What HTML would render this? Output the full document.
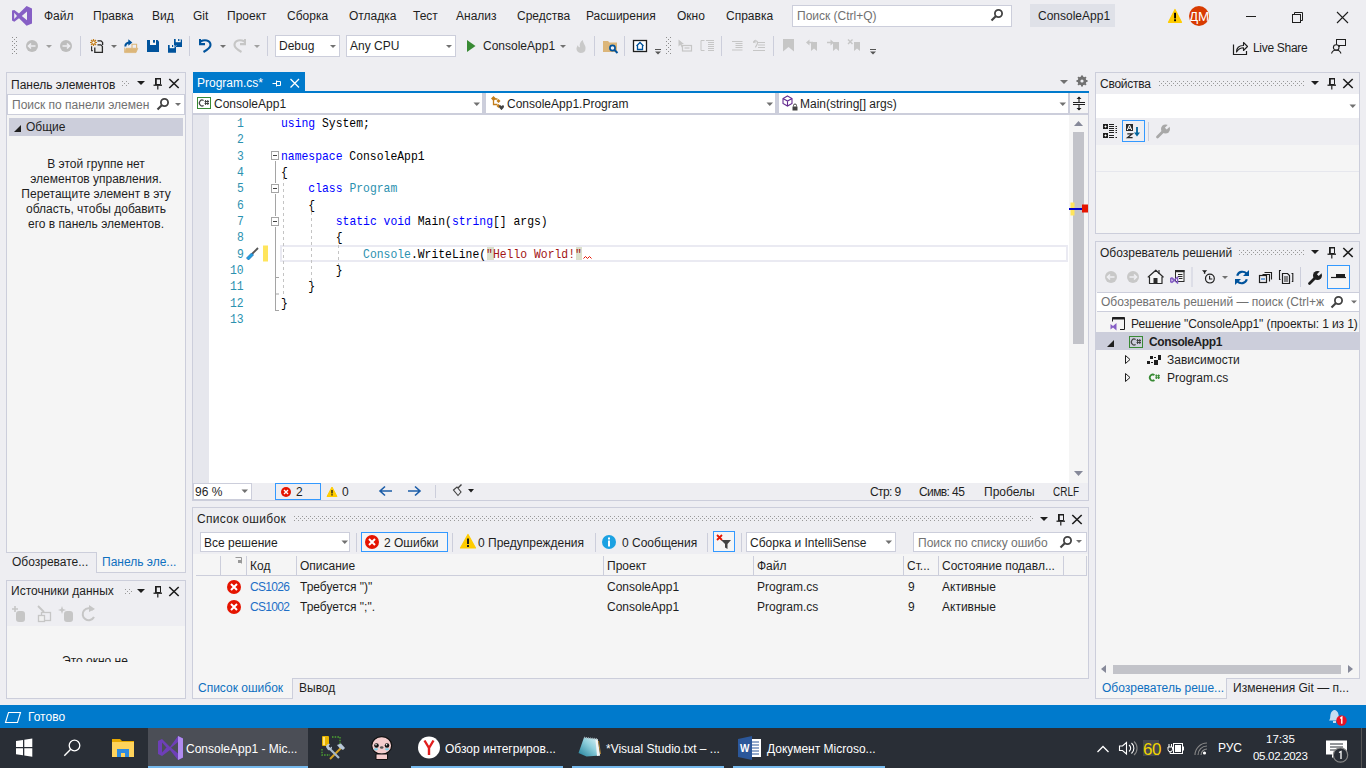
<!DOCTYPE html>
<html><head><meta charset="utf-8">
<style>
*{margin:0;padding:0;box-sizing:border-box}
html,body{width:1366px;height:768px;overflow:hidden;background:#EEEEF2;font-family:"Liberation Sans",sans-serif;font-size:12px;color:#1E1E1E}
.a{position:absolute}
.t{position:absolute;white-space:nowrap;line-height:1}
.mono{font-family:"Liberation Mono",monospace}
</style></head><body>
<!-- MENU BAR -->
<div id="menubar" class="a" style="left:0;top:0;width:1366px;height:31px;background:#EEEEF2">
<svg class="a" style="left:0;top:0" width="40" height="31"><path fill="#865FC5" fill-rule="evenodd" d="M12 10.6 L14.3 9.9 L19 13.6 L26.6 6 L32 8.4 L32 23.4 L26.6 25.8 L19 18.2 L14.3 21.8 L12 20.6 Z M14.2 12.8 L14.2 19 L17 15.9 Z M27 11.6 L27 20.2 L21.8 15.9 Z"/></svg>
<div class="t" style="left:44px;top:10px">Файл</div>
<div class="t" style="left:93px;top:10px">Правка</div>
<div class="t" style="left:152px;top:10px">Вид</div>
<div class="t" style="left:193px;top:10px">Git</div>
<div class="t" style="left:227px;top:10px">Проект</div>
<div class="t" style="left:287px;top:10px">Сборка</div>
<div class="t" style="left:349px;top:10px">Отладка</div>
<div class="t" style="left:413px;top:10px">Тест</div>
<div class="t" style="left:456px;top:10px">Анализ</div>
<div class="t" style="left:517px;top:10px">Средства</div>
<div class="t" style="left:586px;top:10px">Расширения</div>
<div class="t" style="left:677px;top:10px">Окно</div>
<div class="t" style="left:726px;top:10px">Справка</div>
<div class="a" style="left:792px;top:5px;width:220px;height:22px;background:#fff;border:1px solid #CCCEDB"></div>
<div class="t" style="left:797px;top:10px;color:#717171">Поиск (Ctrl+Q)</div>
<svg class="a" style="left:990px;top:8px" width="14" height="14"><circle cx="8.5" cy="5.5" r="3.6" fill="none" stroke="#424242" stroke-width="1.8"/><path d="M6 8 L1.5 12.5" stroke="#424242" stroke-width="2.2"/></svg>
<div class="a" style="left:1030px;top:4px;width:85px;height:23px;background:#DFE1E8"></div>
<div class="t" style="left:1038px;top:10px">ConsoleApp1</div>
<svg class="a" style="left:1166px;top:8px" width="18" height="16"><path d="M9 1.5 L15.5 14.3 L2.5 14.3 Z" fill="#FFCC00" stroke="#FFCC00" stroke-linejoin="round" stroke-width="1.2"/><rect x="8.1" y="4.8" width="1.9" height="5.6" fill="#000"/><rect x="8.1" y="11.3" width="1.9" height="1.9" fill="#000"/></svg>
<div class="a" style="left:1189px;top:6px;width:20px;height:20px;border-radius:50%;background:#D83B01;overflow:hidden"><div class="t" style="left:0px;top:4px;color:#fff;font-size:13.5px;line-height:13px;letter-spacing:-0.2px">ДМ</div></div>
<div class="a" style="left:1246px;top:16px;width:10px;height:1px;background:#1E1E1E"></div>
<svg class="a" style="left:1290px;top:10px" width="14" height="14"><rect x="2.5" y="4.5" width="8" height="8" fill="none" stroke="#1E1E1E"/><path d="M4.5 4.5 V2.5 H12.5 V10.5 H10.5" fill="none" stroke="#1E1E1E"/></svg>
<svg class="a" style="left:1336px;top:11px" width="13" height="13"><path d="M1 1 L12 12 M12 1 L1 12" stroke="#1E1E1E" stroke-width="1.1"/></svg>
</div>
<!-- TOOLBAR -->

<div id="toolbar" class="a" style="left:0;top:31px;width:1366px;height:33px;background:#EEEEF2">

</div>
<svg class="a" style="left:12px;top:37px" width="5" height="17" fill="#8E8E8E"><rect x="0" y="0" width="1" height="1"/><rect x="4" y="0" width="1" height="1"/><rect x="2" y="2" width="1" height="1"/><rect x="0" y="4" width="1" height="1"/><rect x="4" y="4" width="1" height="1"/><rect x="2" y="6" width="1" height="1"/><rect x="0" y="8" width="1" height="1"/><rect x="4" y="8" width="1" height="1"/><rect x="2" y="10" width="1" height="1"/><rect x="0" y="12" width="1" height="1"/><rect x="4" y="12" width="1" height="1"/><rect x="2" y="14" width="1" height="1"/><rect x="0" y="16" width="1" height="1"/><rect x="4" y="16" width="1" height="1"/></svg>
<svg class="a" style="left:666px;top:37px" width="5" height="17" fill="#8E8E8E"><rect x="0" y="0" width="1" height="1"/><rect x="4" y="0" width="1" height="1"/><rect x="2" y="2" width="1" height="1"/><rect x="0" y="4" width="1" height="1"/><rect x="4" y="4" width="1" height="1"/><rect x="2" y="6" width="1" height="1"/><rect x="0" y="8" width="1" height="1"/><rect x="4" y="8" width="1" height="1"/><rect x="2" y="10" width="1" height="1"/><rect x="0" y="12" width="1" height="1"/><rect x="4" y="12" width="1" height="1"/><rect x="2" y="14" width="1" height="1"/><rect x="0" y="16" width="1" height="1"/><rect x="4" y="16" width="1" height="1"/></svg>
<svg class="a" style="left:0;top:31px" width="900" height="33">
<!-- back/fwd -->
<circle cx="32" cy="15" r="6" fill="#BDBDBD"/><path d="M28.5 15 H35.5 M31 12.5 L28.5 15 L31 17.5" stroke="#EEEEF2" stroke-width="1.6" fill="none"/>
<path d="M46 14 H52 L49 17 Z" fill="#A0A0A0"/>
<circle cx="66" cy="15" r="6" fill="#BDBDBD"/><path d="M62.5 15 H69.5 M67 12.5 L69.5 15 L67 17.5" stroke="#EEEEF2" stroke-width="1.6" fill="none"/>
<rect x="80" y="5" width="1" height="20" fill="#CCCEDB"/>
<!-- new project -->
<g transform="translate(0,-31)">
<g stroke="#C27D1A" stroke-width="1.2"><path d="M93.5 39 V46 M90 42.5 H97 M91 40 L96 45 M96 40 L91 45"/></g><circle cx="93.5" cy="42.5" r="1.6" fill="#fff" stroke="#C27D1A" stroke-width="1"/>
<path d="M97.5 40.8 H101 L102.6 42.4 V45" fill="none" stroke="#2A2A2A" stroke-width="1.3"/>
<path d="M94.8 47.5 V52.4 H102.4 V46.4 L100.8 44.8 H97.5" fill="#EBEBEB" stroke="#2A2A2A" stroke-width="1.3"/>
<path d="M91.6 46.3 V50.6 H92.8" fill="none" stroke="#2A2A2A" stroke-width="1.1"/>
<path d="M111 45 H117 L114 48 Z" fill="#717171"/>
<!-- open -->
<path d="M124.6 47.5 V52.6 H136 L137.8 48.3 H126 L124.9 52" fill="#DCB67A" stroke="#DCB67A" stroke-width="0.8" stroke-linejoin="round"/>
<path d="M132 48 V44.2 H136.6 V48" fill="none" stroke="#DCB67A" stroke-width="1.1"/>
<path d="M125.3 46.5 C125.3 43.5, 127 42.5, 130.5 42.5" fill="none" stroke="#00539C" stroke-width="2"/>
<path d="M128.3 39.2 L132.3 42.5 L128.3 45.8 Z" fill="#00539C"/>
<!-- save -->
<path d="M147 40 H157.6 L159 41.4 V52 H147 Z" fill="#00539C"/><rect x="150" y="40" width="6" height="5" fill="#F5F5F5"/><rect x="153" y="40" width="2" height="2.7" fill="#00539C"/>
<!-- save all -->
<path d="M174 39 H181 L182 40 V47 H174 Z" fill="#00539C"/><rect x="175.7" y="39" width="5" height="3.2" fill="#F5F5F5"/><rect x="178.1" y="39" width="1.3" height="2" fill="#00539C"/>
<path d="M168 45 H175 L176 46 V52.7 H168 Z" fill="#00539C" stroke="#EEEEF2" stroke-width="0"/><rect x="169.7" y="45" width="4.8" height="3.2" fill="#F5F5F5"/><rect x="172" y="45" width="1.2" height="2" fill="#00539C"/>
<path d="M175.2 46.5 L176.5 45.5" stroke="#EEEEF2" stroke-width="0.8"/>
</g>
<rect x="189" y="5" width="1" height="20" fill="#CCCEDB"/>
<!-- undo -->
<g transform="translate(0,-31)">
<path d="M200.5 41.5 C204 39.5, 210.5 39.5, 210.5 45 C210.5 47, 208 49.5, 203.5 52" stroke="#00539C" stroke-width="2.1" fill="none"/>
<path d="M199 39 H201 V43 H205 V45.2 H199 Z" fill="#00539C"/>
</g>
<path d="M220 14 H226 L223 17 Z" fill="#717171"/>
<g transform="translate(445,-31) scale(-1,1)">
<path d="M200.5 41.5 C204 39.5, 210.5 39.5, 210.5 45 C210.5 47, 208 49.5, 203.5 52" stroke="#C6C6C6" stroke-width="2.1" fill="none"/>
<path d="M199 39 H201 V43 H205 V45.2 H199 Z" fill="#C6C6C6"/>
</g>
<path d="M254 14 H260 L257 17 Z" fill="#A0A0A0"/>
<rect x="267" y="5" width="1" height="20" fill="#CCCEDB"/>
<!-- combos -->
<rect x="275.5" y="4.5" width="64" height="21" fill="#fff" stroke="#CCCEDB"/>
<path d="M330 14 H336 L333 17 Z" fill="#717171"/>
<rect x="346.5" y="4.5" width="109" height="21" fill="#fff" stroke="#CCCEDB"/>
<path d="M446 14 H452 L449 17 Z" fill="#717171"/>
<path d="M467 9 L475.5 15 L467 21 Z" fill="#388A34"/>
<path d="M560 14 H566 L563 17 Z" fill="#717171"/>
<path d="M580.5 22 C576 21, 575.5 17, 578 14 C578 16, 579.5 16.5, 580 16 C579 13, 581 10, 583 9 C582.5 12, 586 14, 585.5 18 C585.5 20.5, 583.5 22, 580.5 22 Z" fill="#C9C9C9"/>
<rect x="594" y="5" width="1" height="20" fill="#CCCEDB"/>
<!-- find in files -->
<path d="M603 10 H608 L609.5 11.5 H617 V21 H603 Z" fill="#DCB67A"/>
<circle cx="612.5" cy="17" r="2.6" fill="#EEEEF2" stroke="#00539C" stroke-width="1.6"/><path d="M614.5 19 L617.5 22" stroke="#00539C" stroke-width="2"/>
<rect x="624" y="5" width="1" height="20" fill="#CCCEDB"/>
<!-- home box -->
<rect x="633.5" y="9.5" width="13" height="11" fill="#fff" stroke="#1E1E1E" stroke-width="1.3"/>
<path d="M636.5 15 L640 11.5 L643.5 15 M637.5 14.5 V18.5 H642.5 V14.5" stroke="#00539C" stroke-width="1.3" fill="none"/>
<path d="M655 18.5 H661" stroke="#555" stroke-width="1"/><path d="M655 20.5 H661 L658 23.5 Z" fill="#555"/>
</svg>

<svg class="a" style="left:0;top:31px" width="900" height="33">
<g transform="translate(0,-31)">
<g stroke="#C6C6C6" fill="none" stroke-width="1.2">
<rect x="682.5" y="45.5" width="9" height="5.5"/><path d="M684.5 48 H689.5"/>
<path d="M704.5 40.5 H701 V50.5 H704.5 M706 40.5 H714 M708 42.5 H714 M708 44.5 H714 M708 46.5 H714 M708 48.5 H714 M708 50.5 H714" stroke-width="1"/>
<path d="M732 41.5 H742.5 M735.5 43.5 H742.5 M735.5 45.5 H742.5 M735.5 47.5 H742.5 M732 50 H742.5"/>
<path d="M758 42.5 H765 M758 45 H765 M758 47.5 H765 M753 50.5 H765 M753.5 43 C754 40, 757.5 40, 757.5 43 C757.5 45, 755.5 46, 755.5 47.5"/>
</g>
<path d="M678.5 39.5 V46.5 L680.3 44.8 L681.8 47.5 L683 46.8 L681.6 44.2 L684 44 Z" fill="#C6C6C6"/>
<path d="M753 41.5 L755.5 39.5 V43.5 Z" fill="#C6C6C6"/>
<g fill="#C6C6C6">
<path d="M783 39 H794 V51.5 L788.5 47 L783 51.5 Z"/>
<path d="M811 42 H817 V51 L814 48.5 L811 51 Z"/><path d="M806 42.5 L809.5 39.5 V41.7 H813 V43.3 H809.5 V45.5 Z"/>
<path d="M833 42 H839 V51 L836 48.5 L833 51 Z"/><path d="M834 42.5 L830.5 39.5 V41.7 H827 V43.3 H830.5 V45.5 Z"/>
<path d="M854 42 H860 V51 L857 48.5 L854 51 Z"/>
</g>
<path d="M848 39.5 L852.5 44 M852.5 39.5 L848 44" stroke="#C6C6C6" stroke-width="1.4"/>
<rect x="721" y="36" width="1" height="20" fill="#CCCEDB"/><rect x="773" y="36" width="1" height="20" fill="#CCCEDB"/>
<path d="M870 49.5 H876" stroke="#555" stroke-width="1"/><path d="M870 51.5 H876 L873 54.5 Z" fill="#555"/>
</g>
</svg>
<div class="t" style="left:279px;top:40px">Debug</div>
<div class="t" style="left:350px;top:40px">Any CPU</div>
<div class="t" style="left:483px;top:40px">ConsoleApp1</div>
<svg class="a" style="left:1228px;top:38px" width="22" height="20"><path d="M5.5 6.5 V16.5 H18.5 V13" fill="none" stroke="#1E1E1E" stroke-width="1.2"/><path d="M8.5 14 C8.5 9.5, 11.5 7.5, 15.5 7.5 V4.5 L19.5 8.5 L15.5 12.5 V9.8 C12.5 9.8, 10.5 11, 8.5 14 Z" fill="none" stroke="#1E1E1E" stroke-width="1.1" stroke-linejoin="round"/></svg>
<div class="t" style="left:1253px;top:42px;letter-spacing:-0.3px">Live Share</div>
<svg class="a" style="left:1328px;top:36px" width="20" height="20"><rect x="8.5" y="3.5" width="9" height="6" fill="none" stroke="#1E1E1E"/><path d="M12 9.5 L11 11" stroke="#1E1E1E"/><circle cx="8.2" cy="11.5" r="2.8" fill="#EEEEF2" stroke="#1E1E1E" stroke-width="1.1"/><path d="M3.5 17.5 C4.5 14.5, 6 14, 8.2 14 C10.4 14, 12 14.5, 13 17.5" fill="none" stroke="#1E1E1E" stroke-width="1.1"/></svg>

<!-- LEFT TOOLBOX PANEL -->
<div class="a" style="left:6px;top:72px;width:180px;height:481px;border:1px solid #CCCEDB;border-bottom:none;background:#EEEEF2"></div>
<div class="t" style="left:11px;top:79px">Панель элементов</div>
<svg class="a" style="left:6px;top:72px" width="180" height="22">
<g fill="#999"><rect x="116" y="9" width="1" height="1"/><rect x="120" y="9" width="1" height="1"/><rect x="118" y="11" width="1" height="1"/><rect x="122" y="11" width="1" height="1"/><rect x="116" y="13" width="1" height="1"/><rect x="120" y="13" width="1" height="1"/></g>
<path d="M131 9 H139 L135 13 Z" fill="#1E1E1E"/>
<path d="M149.5 6.5 H154.5 V12.5 H149.5 Z" stroke="#1E1E1E" stroke-width="1" fill="none"/><path d="M150 6 V13 M149 6.7 H155" stroke="#1E1E1E" stroke-width="1.6"/><path d="M147.5 13.2 H156" stroke="#1E1E1E" stroke-width="1.3"/><path d="M151.8 13.5 V17.5" stroke="#1E1E1E" stroke-width="1.2"/>
<path d="M163.3 7 L172.7 16 M172.7 7 L163.3 16" stroke="#1E1E1E" stroke-width="1.6"/>
</svg>
<div class="a" style="left:7px;top:94px;width:178px;height:21px;background:#fff;border:1px solid #CCCEDB"></div>
<div class="t" style="left:12px;top:99px;color:#717171">Поиск по панели элемен</div>
<svg class="a" style="left:155px;top:96px" width="30" height="16"><circle cx="9.5" cy="6.5" r="3.6" fill="none" stroke="#424242" stroke-width="1.8"/><path d="M7 9 L2.5 13.5" stroke="#424242" stroke-width="2.2"/><path d="M20 7 H26 L23 10 Z" fill="#717171"/></svg>
<div class="a" style="left:7px;top:115px;width:178px;height:437px;background:#F5F5F5"></div>
<div class="a" style="left:9px;top:118px;width:174px;height:18px;background:#CCCEDB"></div>
<svg class="a" style="left:13px;top:124px" width="10" height="10"><path d="M8 1 V8 H1 Z" fill="#1E1E1E"/></svg>
<div class="t" style="left:26px;top:121px">Общие</div>
<div class="a" style="left:6px;top:157px;width:180px;text-align:center;line-height:15px;color:#1E1E1E">В этой группе нет<br>элементов управления.<br>Перетащите элемент в эту<br>область, чтобы добавить<br>его в панель элементов.</div>
<div class="a" style="left:6px;top:552px;width:91px;height:1px;background:#CCCEDB"></div>
<div class="a" style="left:96px;top:552px;width:90px;height:21px;border:1px solid #CCCEDB;border-top:none;background:#F5F5F5"></div>
<div class="t" style="left:12px;top:556px">Обозревате...</div>
<div class="t" style="left:102px;top:556px;color:#0E70C0">Панель эле...</div>
<!-- DATA SOURCES PANEL -->
<div class="a" style="left:6px;top:580px;width:180px;height:119px;border:1px solid #CCCEDB;background:#EEEEF2"></div>
<div class="t" style="left:11px;top:585px">Источники данных</div>
<svg class="a" style="left:6px;top:580px" width="180" height="22">
<g fill="#999"><rect x="119" y="9" width="1" height="1"/><rect x="123" y="9" width="1" height="1"/><rect x="121" y="11" width="1" height="1"/><rect x="125" y="11" width="1" height="1"/><rect x="119" y="13" width="1" height="1"/><rect x="123" y="13" width="1" height="1"/></g>
<path d="M131 9 H139 L135 13 Z" fill="#1E1E1E"/>
<path d="M149.5 6.5 H154.5 V12.5 H149.5 Z" stroke="#1E1E1E" stroke-width="1" fill="none"/><path d="M150 6 V13 M149 6.7 H155" stroke="#1E1E1E" stroke-width="1.6"/><path d="M147.5 13.2 H156" stroke="#1E1E1E" stroke-width="1.3"/><path d="M151.8 13.5 V17.5" stroke="#1E1E1E" stroke-width="1.2"/>
<path d="M163.3 7 L172.7 16 M172.7 7 L163.3 16" stroke="#1E1E1E" stroke-width="1.6"/>
</svg>
<div class="a" style="left:7px;top:626px;width:178px;height:72px;background:#F5F5F5;overflow:hidden">
<div class="t" style="left:55px;top:29px">Это окно не</div>
</div>
<div class="a" style="left:7px;top:662px;width:178px;height:36px;background:#F5F5F5"></div>
<svg class="a" style="left:7px;top:602px" width="100" height="22" fill="#C6C6C6">
<path d="M8 4 V10 M5 7 H11" stroke="#C6C6C6" stroke-width="1.6"/><rect x="9" y="9" width="9" height="11" rx="3"/>
<path d="M31 4 L37 10" stroke="#C6C6C6" stroke-width="1.8"/><rect x="34.5" y="10.5" width="9" height="8" fill="none" stroke="#C6C6C6" stroke-width="1.3"/><rect x="31.5" y="13.5" width="6" height="6" fill="#F0F0F0" stroke="#C6C6C6" stroke-width="1.3"/>
<path d="M55 4 L56 7 L59 8 L56 9 L55 12 L54 9 L51 8 L54 7 Z"/><rect x="57" y="9" width="9" height="11" rx="3"/>
<path d="M86 8 A6 6 0 1 0 87 15" fill="none" stroke="#C6C6C6" stroke-width="2"/><path d="M82 3 L88 7 L82 10 Z"/>
</svg>

<!-- EDITOR -->
<div class="a" style="left:193px;top:72px;width:112px;height:21px;background:#007ACC"></div>
<div class="t" style="left:197px;top:77px;color:#fff">Program.cs*</div>
<svg class="a" style="left:270px;top:76px" width="34" height="14"><path d="M2.5 7.5 H6.5 M6.5 4.5 V10.5 M6.5 5.5 H10.5 V9.5 H6.5" stroke="#fff" fill="none" stroke-width="1"/><path d="M20.5 3 L29 11.5 M29 3 L20.5 11.5" stroke="#fff" stroke-width="1.3"/></svg>
<svg class="a" style="left:1058px;top:74px" width="32" height="16"><path d="M2 6 H10 L6 10 Z" fill="#717171"/><g transform="translate(24,7)"><circle r="3.3" fill="none" stroke="#717171" stroke-width="2.2"/><g stroke="#717171" stroke-width="2"><path d="M0 -5.5 V5.5 M-5.5 0 H5.5 M-3.9 -3.9 L3.9 3.9 M3.9 -3.9 L-3.9 3.9"/></g><circle r="1.6" fill="#EEEEF2"/></g></svg>
<div class="a" style="left:193px;top:91px;width:896px;height:2px;background:#007ACC"></div>
<div class="a" style="left:192px;top:93px;width:897px;height:408px;border:1px solid #CCCEDB;border-top:none;background:#fff"></div>
<!-- nav bar -->
<div class="a" style="left:193px;top:113px;width:895px;height:2px;background:#CCCEDB"></div>
<div class="a" style="left:482px;top:93px;width:4px;height:20px;background:#CCCEDB"></div>
<div class="a" style="left:775px;top:93px;width:4px;height:20px;background:#CCCEDB"></div>
<div class="a" style="left:1068px;top:93px;width:2px;height:20px;background:#CCCEDB"></div>
<div class="a" style="left:1070px;top:93px;width:18px;height:20px;background:#F5F5F5"></div>
<svg class="a" style="left:196px;top:96px" width="16" height="14"><rect x="1.5" y="1.5" width="13" height="11" fill="#fff" stroke="#388A34"/><path d="M7.6 4.6 A2.7 2.9 0 1 0 7.6 9.4" fill="none" stroke="#424242" stroke-width="1.2"/><path d="M9.6 4 V9 M11.8 4 V9 M8.6 5.5 H13 M8.6 7.5 H13" stroke="#424242" stroke-width="1"/></svg>
<div class="t" style="left:214px;top:98px">ConsoleApp1</div>
<svg class="a" style="left:473px;top:102px" width="8" height="5"><path d="M0.5 0.5 H7 L3.75 4 Z" fill="#717171"/></svg>
<svg class="a" style="left:488px;top:95px" width="18" height="16"><path d="M3 3.5 L5.5 1 L8 3.5 L5.5 6 Z M8.5 6 L10.5 4 L12.5 6 L10.5 8 Z M8.5 11 L10.5 9 L12.5 11 L10.5 13 Z" fill="#C27D1A"/><path d="M5.5 5 V9.5 H9.5 M6.5 4 H9.5" stroke="#C27D1A" stroke-width="1.3" fill="none"/><path d="M11 11.5 C11 10, 13 10, 13.5 11.2 C14 10, 16 10, 16 11.5 C16 13, 13.5 15, 13.5 15 C13.5 15, 11 13, 11 11.5 Z" fill="#424242"/></svg>
<div class="t" style="left:507px;top:98px">ConsoleApp1.Program</div>
<svg class="a" style="left:766px;top:102px" width="8" height="5"><path d="M0.5 0.5 H7 L3.75 4 Z" fill="#717171"/></svg>
<svg class="a" style="left:782px;top:95px" width="18" height="16"><path d="M5.5 1 L10 3.5 V8.5 L5.5 11 L1 8.5 V3.5 Z M1 3.5 L5.5 6 L10 3.5 M5.5 6 V11" fill="none" stroke="#652D90" stroke-width="1.1"/><rect x="10.5" y="11.5" width="5" height="4" fill="#424242"/><path d="M11.5 11.5 V10.5 A1.5 1.5 0 0 1 14.5 10.5 V11.5" fill="none" stroke="#424242"/></svg>
<div class="t" style="left:800px;top:98px">Main(string[] args)</div>
<svg class="a" style="left:1059px;top:102px" width="8" height="5"><path d="M0.5 0.5 H7 L3.75 4 Z" fill="#717171"/></svg>
<svg class="a" style="left:1070px;top:94px" width="18" height="19"><path d="M3 8.5 H15 M3 10.5 H15 M9 3 V8 M9 11 V16" stroke="#1E1E1E" stroke-width="1.1"/><path d="M6.5 5 L9 2.5 L11.5 5 Z M6.5 14 L9 16.5 L11.5 14 Z" fill="#1E1E1E"/></svg>
<!-- margin -->
<div class="a" style="left:193px;top:115px;width:16px;height:368px;background:#E6E7ED"></div>
<!-- scrollbar -->
<div class="a" style="left:1069px;top:115px;width:19px;height:368px;background:#F5F5F5"></div>
<svg class="a" style="left:1069px;top:115px" width="19" height="368"><path d="M5 11 H14 L9.5 6 Z" fill="#868999"/><path d="M5 356 H14 L9.5 361 Z" fill="#868999"/><rect x="4" y="17" width="11" height="212" fill="#C2C3C9"/><rect x="1.5" y="87.5" width="4" height="13" fill="#FFE55C"/><rect x="0" y="93" width="19" height="2" fill="#0000CC"/><rect x="13" y="89.5" width="6" height="8" fill="#E51400"/></svg>
<!-- current line -->
<div class="a" style="left:280px;top:245px;width:788px;height:17px;border:2px solid #EAEAF2"></div>
<!-- brace highlight -->
<div class="a" style="left:486.7px;top:247px;width:6.9px;height:13px;background:#DBE0CC"></div>
<div class="a" style="left:575.6px;top:247px;width:6.9px;height:13px;background:#DBE0CC"></div>
<svg class="a" style="left:583px;top:255px" width="10" height="6"><path d="M0.5 3.5 L2.5 1.5 L4.5 3.5 L6.5 1.5 L8.5 3.5" fill="none" stroke="#E51400" stroke-width="1"/></svg>
<!-- outlining -->
<svg class="a" style="left:260px;top:115px" width="40" height="200">
<rect x="11.5" y="36.5" width="7" height="8" fill="#fff" stroke="#A5A5A5"/><path d="M13 40.5 H17" stroke="#424242"/>
<rect x="11.5" y="69.5" width="7" height="8" fill="#fff" stroke="#A5A5A5"/><path d="M13 73.5 H17" stroke="#424242"/>
<rect x="11.5" y="102.5" width="7" height="8" fill="#fff" stroke="#A5A5A5"/><path d="M13 106.5 H17" stroke="#424242"/>
<path d="M15.5 46 V68 M15.5 79 V101 M15.5 112 V196 M15.5 162.5 H19 M15.5 179 H19 M15.5 195.5 H19" stroke="#A5A5A5" fill="none"/>
<path d="M23.5 62 V182" stroke="#C4C4C4" stroke-dasharray="3 3" fill="none"/>
<rect x="3" y="130.5" width="5" height="16" fill="#FFE55C"/>
</svg>
<svg class="a" style="left:300px;top:200px" width="60" height="100"><path d="M11.5 12 V81 M38.5 45 V65" stroke="#C4C4C4" stroke-dasharray="3 3" fill="none"/></svg>
<svg class="a" style="left:245px;top:246px" width="15" height="15"><path d="M7 8 L13 2" stroke="#555" stroke-width="1.8"/><path d="M1.5 12 L6.5 7 L8.5 9 L3.5 14 Z" fill="#1BA1E2" stroke="#2C6BB0" stroke-width="0.8"/></svg>
<div class="t mono" style="left:236.66px;top:116.00px;font-size:12.4px;line-height:16px;color:#2B91AF;transform:scaleX(0.9194);transform-origin:0 0">1</div>
<div class="t mono" style="left:281px;top:116.00px;font-size:12.4px;line-height:16px;white-space:pre;transform:scaleX(0.9194);transform-origin:0 0"><span style="color:#0000FF">using</span><span style="color:#000"> System;</span></div>
<div class="t mono" style="left:236.66px;top:132.33px;font-size:12.4px;line-height:16px;color:#2B91AF;transform:scaleX(0.9194);transform-origin:0 0">2</div>
<div class="t mono" style="left:236.66px;top:148.67px;font-size:12.4px;line-height:16px;color:#2B91AF;transform:scaleX(0.9194);transform-origin:0 0">3</div>
<div class="t mono" style="left:281px;top:148.67px;font-size:12.4px;line-height:16px;white-space:pre;transform:scaleX(0.9194);transform-origin:0 0"><span style="color:#0000FF">namespace</span><span style="color:#000"> ConsoleApp1</span></div>
<div class="t mono" style="left:236.66px;top:165.00px;font-size:12.4px;line-height:16px;color:#2B91AF;transform:scaleX(0.9194);transform-origin:0 0">4</div>
<div class="t mono" style="left:281px;top:165.00px;font-size:12.4px;line-height:16px;white-space:pre;transform:scaleX(0.9194);transform-origin:0 0"><span style="color:#000">{</span></div>
<div class="t mono" style="left:236.66px;top:181.33px;font-size:12.4px;line-height:16px;color:#2B91AF;transform:scaleX(0.9194);transform-origin:0 0">5</div>
<div class="t mono" style="left:281px;top:181.33px;font-size:12.4px;line-height:16px;white-space:pre;transform:scaleX(0.9194);transform-origin:0 0">    <span style="color:#0000FF">class</span> <span style="color:#2B91AF">Program</span></div>
<div class="t mono" style="left:236.66px;top:197.66px;font-size:12.4px;line-height:16px;color:#2B91AF;transform:scaleX(0.9194);transform-origin:0 0">6</div>
<div class="t mono" style="left:281px;top:197.66px;font-size:12.4px;line-height:16px;white-space:pre;transform:scaleX(0.9194);transform-origin:0 0"><span style="color:#000">    {</span></div>
<div class="t mono" style="left:236.66px;top:214.00px;font-size:12.4px;line-height:16px;color:#2B91AF;transform:scaleX(0.9194);transform-origin:0 0">7</div>
<div class="t mono" style="left:281px;top:214.00px;font-size:12.4px;line-height:16px;white-space:pre;transform:scaleX(0.9194);transform-origin:0 0">        <span style="color:#0000FF">static</span> <span style="color:#0000FF">void</span><span style="color:#000"> Main(</span><span style="color:#0000FF">string</span><span style="color:#000">[] args)</span></div>
<div class="t mono" style="left:236.66px;top:230.33px;font-size:12.4px;line-height:16px;color:#2B91AF;transform:scaleX(0.9194);transform-origin:0 0">8</div>
<div class="t mono" style="left:281px;top:230.33px;font-size:12.4px;line-height:16px;white-space:pre;transform:scaleX(0.9194);transform-origin:0 0"><span style="color:#000">        {</span></div>
<div class="t mono" style="left:236.66px;top:246.66px;font-size:12.4px;line-height:16px;color:#2B91AF;transform:scaleX(0.9194);transform-origin:0 0">9</div>
<div class="t mono" style="left:281px;top:246.66px;font-size:12.4px;line-height:16px;white-space:pre;transform:scaleX(0.9194);transform-origin:0 0">            <span style="color:#2B91AF">Console</span><span style="color:#000">.WriteLine(</span><span style="color:#A31515">"Hello World!"</span></div>
<div class="t mono" style="left:229.82px;top:263.00px;font-size:12.4px;line-height:16px;color:#2B91AF;transform:scaleX(0.9194);transform-origin:0 0">10</div>
<div class="t mono" style="left:281px;top:263.00px;font-size:12.4px;line-height:16px;white-space:pre;transform:scaleX(0.9194);transform-origin:0 0"><span style="color:#000">        }</span></div>
<div class="t mono" style="left:229.82px;top:279.33px;font-size:12.4px;line-height:16px;color:#2B91AF;transform:scaleX(0.9194);transform-origin:0 0">11</div>
<div class="t mono" style="left:281px;top:279.33px;font-size:12.4px;line-height:16px;white-space:pre;transform:scaleX(0.9194);transform-origin:0 0"><span style="color:#000">    }</span></div>
<div class="t mono" style="left:229.82px;top:295.66px;font-size:12.4px;line-height:16px;color:#2B91AF;transform:scaleX(0.9194);transform-origin:0 0">12</div>
<div class="t mono" style="left:281px;top:295.66px;font-size:12.4px;line-height:16px;white-space:pre;transform:scaleX(0.9194);transform-origin:0 0"><span style="color:#000">}</span></div>
<div class="t mono" style="left:229.82px;top:312.00px;font-size:12.4px;line-height:16px;color:#2B91AF;transform:scaleX(0.9194);transform-origin:0 0">13</div>
<!-- editor bottom bar -->
<div class="a" style="left:193px;top:483px;width:895px;height:17px;background:#EEEEF2"></div>
<div class="a" style="left:193px;top:483px;width:59px;height:17px;background:#fff;border:1px solid #CCCEDB"></div>
<div class="t" style="left:195px;top:486px">96 %</div>
<svg class="a" style="left:241px;top:489px" width="8" height="5"><path d="M0.5 0.5 H7 L3.75 4 Z" fill="#717171"/></svg>
<div class="a" style="left:275px;top:483px;width:46px;height:17px;border:1px solid #3399FF;background:#EEEEF2"></div>
<svg class="a" style="left:280px;top:486px" width="12" height="12"><circle cx="6" cy="6" r="5" fill="#E51400"/><path d="M4 4 L8 8 M8 4 L4 8" stroke="#fff" stroke-width="1.4"/></svg>
<div class="t" style="left:296px;top:486px">2</div>
<svg class="a" style="left:326px;top:486px" width="12" height="12"><path d="M6 1 L11 10.5 H1 Z" fill="#FFCC00" stroke="#FFCC00" stroke-linejoin="round"/><rect x="5.3" y="4" width="1.4" height="3.5" fill="#1E1E1E"/><rect x="5.3" y="8.2" width="1.4" height="1.3" fill="#1E1E1E"/></svg>
<div class="t" style="left:342px;top:486px">0</div>
<svg class="a" style="left:378px;top:485px" width="50" height="12"><path d="M2 6 H14 M7 1.5 L2 6 L7 10.5" stroke="#1C5DA8" stroke-width="1.6" fill="none"/><path d="M30 6 H42 M37 1.5 L42 6 L37 10.5" stroke="#1C5DA8" stroke-width="1.6" fill="none"/></svg>
<div class="a" style="left:435px;top:485px;width:1px;height:13px;background:#CCCEDB"></div>
<svg class="a" style="left:450px;top:484px" width="26" height="14"><path d="M3.5 6 L7 3 L11 8 L8 11.5 Z" fill="none" stroke="#424242" stroke-width="1.1"/><path d="M8 4 L11.5 0.5" stroke="#424242" stroke-width="1.4"/><path d="M18 5 H24 L21 8.5 Z" fill="#1E1E1E"/></svg>
<div class="t" style="left:870px;top:486px;letter-spacing:-0.6px">Стр: 9</div>
<div class="t" style="left:919px;top:486px;letter-spacing:-0.6px">Симв: 45</div>
<div class="t" style="left:984px;top:486px">Пробелы</div>
<div class="t" style="left:1053px;top:486px;transform:scaleX(0.83);transform-origin:0 0">CRLF</div>

<!-- ERROR LIST -->
<div class="a" style="left:192px;top:507px;width:897px;height:172px;border:1px solid #CCCEDB;background:#EEEEF2"></div>
<div class="t" style="left:197px;top:513px;letter-spacing:0.3px">Список ошибок</div>
<svg class="a" style="left:294px;top:516px" width="740" height="5"><defs><pattern id="p294_516" width="4" height="4" patternUnits="userSpaceOnUse"><rect x="0" y="0" width="1" height="1" fill="#999"/><rect x="2" y="2" width="1" height="1" fill="#999"/></pattern></defs><rect width="740" height="5" fill="url(#p294_516)"/></svg>
<svg class="a" style="left:1039px;top:508px" width="50" height="22">
<path d="M1 9 H9 L5 13 Z" fill="#1E1E1E"/>
<path d="M19.5 6.5 H24.5 V12.5 H19.5 Z" stroke="#1E1E1E" stroke-width="1" fill="none"/><path d="M20 6 V13 M19 6.7 H25" stroke="#1E1E1E" stroke-width="1.6"/><path d="M17.5 13.2 H26" stroke="#1E1E1E" stroke-width="1.3"/><path d="M21.8 13.5 V17.5" stroke="#1E1E1E" stroke-width="1.2"/>
<path d="M33.3 7 L42.7 16 M42.7 7 L33.3 16" stroke="#1E1E1E" stroke-width="1.6"/>
</svg>
<div class="a" style="left:200px;top:532px;width:150px;height:20px;background:#fff;border:1px solid #CCCEDB"></div>
<div class="t" style="left:204px;top:537px">Все решение</div>
<svg class="a" style="left:341px;top:540px" width="8" height="5"><path d="M0.5 0.5 H7 L3.75 4 Z" fill="#717171"/></svg>
<div class="a" style="left:356px;top:533px;width:1px;height:19px;background:#CCCEDB"></div>
<div class="a" style="left:361px;top:532px;width:87px;height:20px;border:1px solid #3399FF;background:#F5F5F5"></div>
<svg class="a" style="left:364px;top:534px" width="16" height="16"><circle cx="8" cy="8" r="7" fill="#E51400"/><path d="M5 5 L11 11 M11 5 L5 11" stroke="#fff" stroke-width="2"/></svg>
<div class="t" style="left:384px;top:537px">2 Ошибки</div>
<div class="a" style="left:452px;top:533px;width:1px;height:19px;background:#CCCEDB"></div>
<svg class="a" style="left:459px;top:533px" width="18" height="17"><path d="M9 1.5 L16.5 15 H1.5 Z" fill="#FFCC00" stroke="#FFCC00" stroke-linejoin="round" stroke-width="1.2"/><rect x="8" y="5.5" width="2" height="5.5" fill="#1E1E1E"/><rect x="8" y="12" width="2" height="2" fill="#1E1E1E"/></svg>
<div class="t" style="left:478px;top:537px">0 Предупреждения</div>
<div class="a" style="left:595px;top:533px;width:1px;height:19px;background:#CCCEDB"></div>
<svg class="a" style="left:601px;top:534px" width="16" height="16"><circle cx="8" cy="8" r="7" fill="#1BA1E2"/><rect x="7" y="6.5" width="2" height="6" fill="#fff"/><rect x="7" y="3.5" width="2" height="2" fill="#fff"/></svg>
<div class="t" style="left:622px;top:537px">0 Сообщения</div>
<div class="a" style="left:707px;top:533px;width:1px;height:19px;background:#CCCEDB"></div>
<div class="a" style="left:713px;top:531px;width:22px;height:21px;border:1px solid #3399FF;background:#F5F5F5"></div>
<svg class="a" style="left:714px;top:532px" width="20" height="19"><path d="M3 3 L8 8 M8 3 L3 8" stroke="#E51400" stroke-width="1.8"/><path d="M7 8 H17 L13.5 12 V17 L11 15.5 V12 Z" fill="#424242"/></svg>
<div class="a" style="left:741px;top:533px;width:1px;height:19px;background:#CCCEDB"></div>
<div class="a" style="left:746px;top:532px;width:150px;height:20px;background:#fff;border:1px solid #CCCEDB"></div>
<div class="t" style="left:750px;top:537px">Сборка и IntelliSense</div>
<svg class="a" style="left:885px;top:540px" width="8" height="5"><path d="M0.5 0.5 H7 L3.75 4 Z" fill="#717171"/></svg>
<div class="a" style="left:913px;top:532px;width:174px;height:20px;background:#fff;border:1px solid #CCCEDB"></div>
<div class="t" style="left:918px;top:537px;color:#717171">Поиск по списку ошибо</div>
<svg class="a" style="left:1058px;top:534px" width="30" height="16"><circle cx="9.5" cy="6.5" r="3.6" fill="none" stroke="#424242" stroke-width="1.8"/><path d="M7 9 L2.5 13.5" stroke="#424242" stroke-width="2.2"/><path d="M18 6 H24 L21 9 Z" fill="#717171"/></svg>
<!-- grid -->
<div class="a" style="left:193px;top:554px;width:895px;height:124px;background:#F5F5F5"></div>
<div class="a" style="left:196px;top:575px;width:891px;height:1px;background:#CCCEDB"></div>
<div class="a" style="left:220px;top:556px;width:1px;height:19px;background:#CCCEDB"></div><div class="a" style="left:246px;top:556px;width:1px;height:19px;background:#CCCEDB"></div><div class="a" style="left:296px;top:556px;width:1px;height:19px;background:#CCCEDB"></div><div class="a" style="left:603px;top:556px;width:1px;height:19px;background:#CCCEDB"></div><div class="a" style="left:753px;top:556px;width:1px;height:19px;background:#CCCEDB"></div><div class="a" style="left:903px;top:556px;width:1px;height:19px;background:#CCCEDB"></div><div class="a" style="left:938px;top:556px;width:1px;height:19px;background:#CCCEDB"></div><div class="a" style="left:1063px;top:556px;width:1px;height:19px;background:#CCCEDB"></div><div class="a" style="left:1086px;top:556px;width:1px;height:19px;background:#CCCEDB"></div>
<svg class="a" style="left:235px;top:557px" width="8" height="8"><path d="M0.5 0.5 H6.5 V6.5" fill="none" stroke="#999"/><rect x="3" y="3" width="3" height="3" fill="#999"/></svg>
<div class="t" style="left:250px;top:560px">Код</div>
<div class="t" style="left:300px;top:560px">Описание</div>
<div class="t" style="left:607px;top:560px">Проект</div>
<div class="t" style="left:757px;top:560px">Файл</div>
<div class="t" style="left:907px;top:560px">Ст...</div>
<div class="t" style="left:942px;top:560px">Состояние подавл...</div>
<svg class="a" style="left:226px;top:579px" width="16" height="16"><circle cx="8" cy="8" r="7" fill="#E51400"/><path d="M5 5 L11 11 M11 5 L5 11" stroke="#fff" stroke-width="2"/></svg>
<svg class="a" style="left:226px;top:599px" width="16" height="16"><circle cx="8" cy="8" r="7" fill="#E51400"/><path d="M5 5 L11 11 M11 5 L5 11" stroke="#fff" stroke-width="2"/></svg>
<div class="t" style="left:250px;top:581px;color:#1E6FC6;letter-spacing:-0.7px">CS1026</div>
<div class="t" style="left:300px;top:581px">Требуется ")"</div>
<div class="t" style="left:607px;top:581px">ConsoleApp1</div>
<div class="t" style="left:757px;top:581px">Program.cs</div>
<div class="t" style="left:908px;top:581px">9</div>
<div class="t" style="left:942px;top:581px">Активные</div>
<div class="t" style="left:250px;top:601px;color:#1E6FC6;letter-spacing:-0.7px">CS1002</div>
<div class="t" style="left:300px;top:601px">Требуется ";".</div>
<div class="t" style="left:607px;top:601px">ConsoleApp1</div>
<div class="t" style="left:757px;top:601px">Program.cs</div>
<div class="t" style="left:908px;top:601px">9</div>
<div class="t" style="left:942px;top:601px">Активные</div>
<!-- bottom tabs -->
<div class="a" style="left:192px;top:678px;width:101px;height:21px;border:1px solid #CCCEDB;border-top:none;background:#F5F5F5"></div>
<div class="t" style="left:198px;top:682px;color:#0E70C0">Список ошибок</div>
<div class="t" style="left:299px;top:682px">Вывод</div>

<!-- PROPERTIES -->
<div class="a" style="left:1095px;top:72px;width:265px;height:162px;border:1px solid #CCCEDB;background:#F5F5F5"></div>
<div class="a" style="left:1096px;top:73px;width:263px;height:21px;background:#EEEEF2"></div>
<div class="t" style="left:1100px;top:78px;letter-spacing:-0.25px">Свойства</div>
<svg class="a" style="left:1159px;top:81px" width="145" height="5"><defs><pattern id="p1159_81" width="4" height="4" patternUnits="userSpaceOnUse"><rect x="0" y="0" width="1" height="1" fill="#999"/><rect x="2" y="2" width="1" height="1" fill="#999"/></pattern></defs><rect width="145" height="5" fill="url(#p1159_81)"/></svg>
<svg class="a" style="left:1310px;top:72px" width="50" height="22">
<path d="M1 9 H9 L5 13 Z" fill="#1E1E1E"/>
<path d="M19.5 6.5 H24.5 V12.5 H19.5 Z" stroke="#1E1E1E" stroke-width="1" fill="none"/><path d="M20 6 V13 M19 6.7 H25" stroke="#1E1E1E" stroke-width="1.6"/><path d="M17.5 13.2 H26" stroke="#1E1E1E" stroke-width="1.3"/><path d="M21.8 13.5 V17.5" stroke="#1E1E1E" stroke-width="1.2"/>
<path d="M33.3 7 L42.7 16 M42.7 7 L33.3 16" stroke="#1E1E1E" stroke-width="1.6"/>
</svg>
<div class="a" style="left:1096px;top:94px;width:263px;height:24px;background:#fff"></div>
<svg class="a" style="left:1349px;top:104px" width="8" height="5"><path d="M0.5 0.5 H7 L3.75 4 Z" fill="#717171"/></svg>
<div class="a" style="left:1096px;top:118px;width:263px;height:27px;background:#EEEEF2"></div>
<svg class="a" style="left:1100px;top:120px" width="75" height="24">
<g fill="#1E1E1E"><rect x="3" y="4" width="5" height="5"/><rect x="3" y="13" width="5" height="5"/>
<rect x="9" y="4" width="5" height="1"/><rect x="9" y="6" width="5" height="1"/><rect x="9" y="8" width="5" height="1"/><rect x="9" y="10" width="5" height="1"/><rect x="9" y="12" width="5" height="1"/><rect x="9" y="15" width="5" height="1"/><rect x="9" y="17" width="5" height="1"/>
<rect x="15.5" y="6" width="1.5" height="1"/><rect x="15.5" y="8" width="1.5" height="1"/><rect x="15.5" y="10" width="1.5" height="1"/><rect x="15.5" y="12" width="1.5" height="1"/><rect x="15.5" y="17" width="1.5" height="1"/></g>
<g fill="#fff"><rect x="5" y="5.5" width="1" height="2"/><rect x="4.5" y="6" width="2" height="1"/><rect x="5" y="14.5" width="1" height="2"/><rect x="4.5" y="15" width="2" height="1"/></g>
<rect x="22.5" y="0.5" width="22" height="21" fill="#EEEEF2" stroke="#3399FF"/>
<rect x="26" y="4" width="7" height="7" fill="#2A2A2A"/><path d="M27.3 10 L29.5 5 L31.7 10 M28.2 8.3 H30.8" stroke="#fff" stroke-width="1" fill="none"/>
<path d="M27.3 13.8 H32.3 L27.6 17.6 H32.6" stroke="#2A2A2A" stroke-width="1.3" fill="none"/>
<path d="M37 7 V15" stroke="#00639C" stroke-width="1.8"/><path d="M34 12.5 L37 16.5 L40 12.5 Z" fill="#00639C"/>
<rect x="48" y="2" width="1" height="19" fill="#CCCEDB"/>
<path d="M57.5 17 L63.5 11" stroke="#A8A8A8" stroke-width="2.8" stroke-linecap="round"/><circle cx="65.5" cy="9" r="4.5" fill="#A8A8A8"/><path d="M65.8 8.7 L70.5 4" stroke="#EEEEF2" stroke-width="2.6"/>
</svg>
<div class="a" style="left:1096px;top:171px;width:263px;height:1px;background:#E6E7ED"></div>

<!-- SOLUTION EXPLORER -->
<div class="a" style="left:1095px;top:241px;width:265px;height:438px;border:1px solid #CCCEDB;background:#F5F5F5"></div>
<div class="a" style="left:1096px;top:242px;width:263px;height:50px;background:#EEEEF2"></div>
<div class="t" style="left:1100px;top:247px">Обозреватель решений</div>
<svg class="a" style="left:1239px;top:250px" width="65" height="5"><defs><pattern id="p1239_250" width="4" height="4" patternUnits="userSpaceOnUse"><rect x="0" y="0" width="1" height="1" fill="#999"/><rect x="2" y="2" width="1" height="1" fill="#999"/></pattern></defs><rect width="65" height="5" fill="url(#p1239_250)"/></svg>
<svg class="a" style="left:1310px;top:241px" width="50" height="22">
<path d="M1 9 H9 L5 13 Z" fill="#1E1E1E"/>
<path d="M19.5 6.5 H24.5 V12.5 H19.5 Z" stroke="#1E1E1E" stroke-width="1" fill="none"/><path d="M20 6 V13 M19 6.7 H25" stroke="#1E1E1E" stroke-width="1.6"/><path d="M17.5 13.2 H26" stroke="#1E1E1E" stroke-width="1.3"/><path d="M21.8 13.5 V17.5" stroke="#1E1E1E" stroke-width="1.2"/>
<path d="M33.3 7 L42.7 16 M42.7 7 L33.3 16" stroke="#1E1E1E" stroke-width="1.6"/>
</svg>
<svg class="a" style="left:1096px;top:262px" width="264" height="30">
<circle cx="15" cy="15" r="6" fill="#C8C8C8"/><path d="M11.5 15 H18.5 M14 12.5 L11.5 15 L14 17.5" stroke="#EEEEF2" stroke-width="1.6" fill="none"/>
<circle cx="37" cy="15" r="6" fill="#C8C8C8"/><path d="M33.5 15 H40.5 M38 12.5 L40.5 15 L38 17.5" stroke="#EEEEF2" stroke-width="1.6" fill="none"/>
<path d="M53.5 21.5 V15 H52.2 L59.8 8.2 L67.2 15 H66 V21.5 Z" fill="#F5F5F5" stroke="#2A2A2A" stroke-width="1.2" stroke-linejoin="round"/><rect x="57.5" y="16" width="4" height="5.5" fill="#2A2A2A"/><path d="M63 8 V12" stroke="#2A2A2A" stroke-width="1.1"/>
<rect x="79.5" y="8.5" width="8.5" height="11" fill="#F5F5F5" stroke="#2A2A2A" stroke-width="1"/><rect x="79" y="8" width="9.5" height="2.2" fill="#2A2A2A"/><path d="M82 12.5 H86.5 M82 14.5 H86.5 M83 16.5 H86.5" stroke="#2A2A2A" stroke-width="1"/>
<path d="M74 16 L76 15 L78.5 17 L81.5 14.3 L82.3 14.8 V21.6 L81.5 22 L78.5 19.3 L76 21.3 L74 20.3 Z M75.5 17 V19.5 L77 18.2 Z M81 16.5 V20 L79.2 18.2 Z" fill="#865FC5" fill-rule="evenodd"/>
<rect x="95.5" y="5" width="1" height="20" fill="#CCCEDB"/>
<path d="M106 8.3 H111.2 L109.3 10.2 V11.8 H107.9 V10.2 Z" fill="#1E1E1E"/>
<circle cx="113.9" cy="16.6" r="4.4" fill="none" stroke="#1E1E1E" stroke-width="1.2"/><path d="M113.6 13.8 V17 H116.3" stroke="#1E1E1E" stroke-width="1.1" fill="none"/>
<path d="M126 14 H132 L129 17 Z" fill="#717171"/>
<path d="M141.2 13.8 C142.5 9.5, 147.5 8.5, 150.5 11.5" stroke="#00539C" stroke-width="2.2" fill="none"/><path d="M147 14 H153 V8 Z" fill="#00539C"/>
<path d="M150.8 17.2 C149.5 21.5, 144.5 22.5, 141.5 19.5" stroke="#00539C" stroke-width="2.2" fill="none"/><path d="M145 17 H139 V23 Z" fill="#00539C"/>
<path d="M168.5 10.5 H175.5 V17.5 M166.5 12.5 H173.5 V19.5" stroke="#1E1E1E" stroke-width="1.1" fill="none"/>
<rect x="163.5" y="13.5" width="7" height="7" fill="#EEEEF2" stroke="#1E1E1E" stroke-width="1.2"/><path d="M165 17 H169" stroke="#1C70C8" stroke-width="1.2"/>
<path d="M185 8.5 H183.5 V17.5 H184.5 M195.5 11.5 H196.8 V19.5 H195.8" stroke="#1E1E1E" stroke-width="1.1" fill="none"/>
<path d="M186.5 11.5 H191.5 L193.5 13.5 V21.5 H186.5 Z" fill="#EEEEF2" stroke="#1E1E1E" stroke-width="1.2"/><path d="M188 15 H192 M188 17 H192 M188 19 H192" stroke="#1E1E1E" stroke-width="1"/>
<rect x="204" y="5" width="1" height="20" fill="#CCCEDB"/>
<path d="M213.5 21.5 L219.5 15.5" stroke="#1E1E1E" stroke-width="2.8" stroke-linecap="round"/><circle cx="221.5" cy="13.5" r="4.5" fill="#1E1E1E"/><path d="M221.8 13.2 L226.5 8.5" stroke="#EEEEF2" stroke-width="2.6"/>
<rect x="231.5" y="3.5" width="22" height="23" fill="#F5F5F5" stroke="#3399FF"/>
<path d="M235 15.5 H250" stroke="#1E1E1E" stroke-width="1.2"/><rect x="240" y="12" width="9" height="4" fill="#1E1E1E"/>
</svg>
<div class="a" style="left:1097px;top:292px;width:262px;height:20px;background:#fff;border:1px solid #CCCEDB;border-left:none;border-right:none"></div>
<div class="a" style="left:1096px;top:292px;width:263px;height:20px;overflow:hidden"><div class="t" style="left:5px;top:4px;color:#717171">Обозреватель решений — поиск (Ctrl+ж</div><div class="a" style="left:230px;top:1px;width:33px;height:18px;background:#fff"></div></div>
<svg class="a" style="left:1328px;top:294px" width="32" height="16"><circle cx="10.5" cy="6.5" r="3.6" fill="none" stroke="#424242" stroke-width="1.8"/><path d="M8 9 L3.5 13.5" stroke="#424242" stroke-width="2.2"/><path d="M23 6.5 H29 L26 9.5 Z" fill="#717171"/></svg>
<!-- tree -->
<svg class="a" style="left:1109px;top:316px" width="18" height="16"><path d="M3.5 5.5 V1.5 H15.5 V13.5 H11" stroke="#1E1E1E" fill="none"/><path d="M3.5 1.5 H15.5 V3.5 H3.5 Z" fill="#1E1E1E"/><path d="M1.5 8 L4 10 L7.5 7 V14.5 L4 11.5 L1.5 13.5 Z" fill="#865FC5"/></svg>
<div class="a" style="left:1096px;top:312px;width:263px;height:20px;overflow:hidden"><div class="t" style="left:35px;top:6px;letter-spacing:-0.1px">Решение "ConsoleApp1" (проекты: 1 из 1)</div></div>
<div class="a" style="left:1096px;top:332px;width:263px;height:18px;background:#CCCEDB"></div>
<svg class="a" style="left:1106px;top:339px" width="10" height="9"><path d="M8 1 V8 H1 Z" fill="#1E1E1E"/></svg>
<svg class="a" style="left:1128px;top:335px" width="16" height="14"><rect x="1.5" y="1.5" width="13" height="11" fill="none" stroke="#388A34"/><path d="M7.6 4.6 A2.7 2.9 0 1 0 7.6 9.4" fill="none" stroke="#424242" stroke-width="1.2"/><path d="M9.6 4 V9 M11.8 4 V9 M8.6 5.5 H13 M8.6 7.5 H13" stroke="#424242" stroke-width="1"/></svg>
<div class="t" style="left:1149px;top:336px;font-weight:bold;letter-spacing:-0.4px">ConsoleApp1</div>
<svg class="a" style="left:1124px;top:354px" width="8" height="30"><path d="M1.5 1.5 L6 5.5 L1.5 9.5 Z" fill="none" stroke="#1E1E1E"/><path d="M1.5 19.5 L6 23.5 L1.5 27.5 Z" fill="none" stroke="#1E1E1E"/></svg>
<svg class="a" style="left:1146px;top:353px" width="16" height="13" fill="#1E1E1E"><rect x="1" y="8" width="3" height="3"/><rect x="5" y="9" width="2" height="1"/><rect x="8" y="7" width="4" height="5"/><rect x="4" y="3" width="3" height="3"/><rect x="8" y="4" width="2" height="1"/><rect x="12" y="2" width="3" height="5"/></svg>
<div class="t" style="left:1167px;top:354px">Зависимости</div>
<svg class="a" style="left:1147px;top:372px" width="15" height="11"><path d="M7.4 3.2 A2.8 3.1 0 1 0 7.4 8" fill="none" stroke="#388A34" stroke-width="1.8"/><path d="M9.3 2.5 V7 M11.6 2.5 V7 M8.3 3.8 H13 M8.3 5.8 H13" stroke="#388A34" stroke-width="1.1"/></svg>
<div class="t" style="left:1167px;top:372px">Program.cs</div>
<!-- h scrollbar -->
<svg class="a" style="left:1096px;top:664px" width="263" height="11"><path d="M10 1 V9 L5 5 Z" fill="#868999"/><rect x="17" y="1" width="228" height="9" fill="#C2C3C9"/><path d="M252 1 V9 L257 5 Z" fill="#868999"/></svg>
<!-- bottom tabs -->
<div class="a" style="left:1095px;top:678px;width:132px;height:21px;border:1px solid #CCCEDB;border-top:none;background:#F5F5F5"></div>
<div class="t" style="left:1102px;top:682px;color:#0E70C0">Обозреватель реше...</div>
<div class="t" style="left:1233px;top:682px">Изменения Git — п...</div>

<!-- STATUS BAR -->
<div class="a" style="left:0;top:705px;width:1366px;height:23px;background:#007ACC"></div>
<svg class="a" style="left:3px;top:711px" width="20" height="14"><path d="M5.5 1.5 H17.5 L14.5 11.5 H2.5 Z" fill="none" stroke="#fff" stroke-width="1.1"/></svg>
<div class="t" style="left:28px;top:711px;color:#fff">Готово</div>
<svg class="a" style="left:1326px;top:708px" width="22" height="20"><path d="M3 12.5 C4.5 11, 4 9, 4.5 6.5 C5 3.5, 7 2, 8.5 2 C10 2, 12 3.5, 12.5 6.5 C13 9, 12.5 11, 14 12.5 Z" fill="#C7DDF0"/><rect x="7" y="13" width="3" height="2" fill="#C7DDF0"/><circle cx="15.5" cy="12.5" r="5.2" fill="#E81123"/><path d="M14.2 10.3 L15.8 9.2 V15.8" stroke="#fff" stroke-width="1.4" fill="none"/></svg>
<!-- TASKBAR -->
<div class="a" style="left:0;top:728px;width:1366px;height:40px;background:#292E36"></div>
<svg class="a" style="left:0;top:728px" width="1366" height="40">
<!-- start -->
<path d="M16 13 L23 12 V19 H16 Z M24.3 11.8 L32.3 10.6 V19 H24.3 Z M16 20.3 H23 V27.3 L16 26.3 Z M24.3 20.3 H32.3 V28.7 L24.3 27.5 Z" fill="#fff"/>
<!-- search -->
<circle cx="74.5" cy="17.5" r="5.3" fill="none" stroke="#fff" stroke-width="1.3"/><path d="M70.7 21.3 L64.3 27.7" stroke="#fff" stroke-width="1.4"/>
<!-- explorer -->
<path d="M112 11 H120 L122 13 H134 V28 H112 Z" fill="#E8A800"/><rect x="112" y="14" width="22" height="15" fill="#FFD35B"/><path d="M117 21 H129 V29 H125 V25 H121 V29 H117 Z" fill="#2E8BE0"/>
<!-- active VS -->
<rect x="148" y="0" width="160" height="40" fill="#4B4E56"/>
<rect x="148" y="38" width="160" height="2" fill="#76B9ED"/>
<path d="M158 13 L162 11 L170 19 L178 8 L183 10.5 V29.5 L178 32 L170 22 L162 28 L158 26 Z" fill="#6E3FB8"/>
<path d="M178 8 L183 10.5 V29.5 L178 32 Z" fill="#B08BEF"/>
<path d="M162 14.5 V24.5 L166.5 19.5 Z" fill="#4B4E56"/><path d="M178 14 V25.5 L171 19.7 Z" fill="#4B4E56"/>
<!-- tools icon -->
<rect x="322" y="8" width="7" height="10" rx="1" fill="#E8B400"/><rect x="323" y="9" width="2" height="8" fill="#FFE27A"/>
<path d="M332 9 H340 V17 M322 21 V27 H330" stroke="#4FA832" stroke-width="1.3" stroke-dasharray="1.5 1.2" fill="none"/>
<path d="M330 31 L341 20" stroke="#D4A020" stroke-width="2"/><path d="M327.5 18.5 L339 30" stroke="#A8B8C8" stroke-width="2.2"/>
<path d="M326 19 A3 3 0 0 1 330 16 L328.5 18.5 L330 20 L332 18.5 A3 3 0 0 1 328 22 Z" fill="#B8C8D8"/>
<path d="M337 17 L341 15.5 L345 20 L343 22 L339.5 20 Z" fill="#B8C8D8"/>
<!-- isaac -->
<ellipse cx="381.7" cy="17.5" rx="10" ry="8.8" fill="#F4CDCD" stroke="#111" stroke-width="1.2"/>
<path d="M376 26 H387.5 V31.5 H376 Z" fill="#F4CDCD" stroke="#111" stroke-width="1"/>
<circle cx="376.5" cy="17.5" r="2.3" fill="#111"/><circle cx="387" cy="17.5" r="2.3" fill="#111"/><circle cx="376" cy="16.8" r="0.8" fill="#fff"/><circle cx="386.5" cy="16.8" r="0.8" fill="#fff"/>
<path d="M374.5 20.5 Q376 23, 377.5 20.5 M385.5 20.5 Q387 23, 388.5 20.5" stroke="#7FD0E8" stroke-width="1.6" fill="#7FD0E8"/>
<ellipse cx="381.7" cy="19.5" rx="1.8" ry="1.3" fill="#555"/>
<!-- yandex -->
<rect x="411" y="38" width="152" height="2" fill="#76B9ED"/>
<circle cx="429" cy="19.5" r="11" fill="#fff"/><path d="M424.5 12.5 L429 20 L433.5 12.5 M429 20 V27" stroke="#E11E1E" stroke-width="2.4" fill="none"/>
<!-- notepad -->
<rect x="572" y="38" width="152" height="2" fill="#76B9ED"/>
<defs><linearGradient id="npg" x1="0" y1="1" x2="1" y2="0"><stop offset="0" stop-color="#1F7F9A"/><stop offset="0.55" stop-color="#8FCFDC"/><stop offset="1" stop-color="#E6F6F8"/></linearGradient></defs>
<path d="M584 9.5 L597.5 11 L600 27.5 L586.5 28.5 L578.5 25 Z" fill="url(#npg)"/>
<path d="M597.5 11 L600 27.5 L597 28 L595.5 12 Z" fill="#F4F4F4"/><path d="M598.5 13 L600.5 26" stroke="#D29A3A" stroke-width="0.8"/>
<path d="M584 9.5 L597.5 11" stroke="#9AA8B0" stroke-width="1.5" stroke-dasharray="1 1"/>
<!-- word -->
<rect x="733" y="38" width="152" height="2" fill="#76B9ED"/>
<rect x="747" y="11" width="14" height="18" fill="#fff"/><path d="M749 14 H759 M749 17 H759 M749 20 H759 M749 23 H759 M749 26 H759" stroke="#2B579A" stroke-width="1"/>
<path d="M738 11 L752 8 V32 L738 29 Z" fill="#2B579A"/><text x="740" y="24" font-family="Liberation Sans" font-weight="bold" font-size="10" fill="#fff">W</text>
<!-- tray -->
<path d="M1097.5 24 L1103 18.5 L1108.5 24" stroke="#fff" stroke-width="1.3" fill="none"/>
<path d="M1119.5 18 H1122.5 L1126.5 14.5 V26 L1122.5 22.5 H1119.5 Z" fill="none" stroke="#fff" stroke-width="1.1"/><path d="M1129 17 A4 4 0 0 1 1129 23.5 M1131.5 15 A7 7 0 0 1 1131.5 25.5" fill="none" stroke="#fff" stroke-width="1.1"/><path d="M1134 13.5 A9 9 0 0 1 1134 27" fill="none" stroke="#888" stroke-width="1.1"/>
<rect x="1143" y="12" width="16" height="16" fill="#45474D"/>
<path d="M1169 16 V19 M1171.5 16 V19 M1168 19 H1172.5 V21.5 A2 2 0 0 1 1168 21.5 Z M1170 23 V25.5 H1173" stroke="#fff" stroke-width="1" fill="none"/>
<rect x="1173.5" y="15.5" width="9" height="10" fill="none" stroke="#fff"/><rect x="1175" y="17" width="6" height="7" fill="#fff"/><rect x="1182.5" y="18.5" width="1.5" height="4" fill="#fff"/>
<path d="M1195 27 A12 12 0 0 1 1207 15 M1198 27 A9 9 0 0 1 1207 18 M1201 27 A6 6 0 0 1 1207 21" stroke="#888" stroke-width="1.1" fill="none"/><circle cx="1204.5" cy="25" r="1.6" fill="#fff"/>
<path d="M1326 12.5 H1347 V26.5 H1336 L1332 30 V26.5 H1326 Z" fill="#fff"/><path d="M1330 16 H1343 M1330 19 H1343 M1330 22 H1339" stroke="#292E36" stroke-width="1.2"/>
<circle cx="1340.5" cy="27" r="7.2" fill="#292E36" stroke="#888" stroke-width="1.2"/><path d="M1339 24.5 L1341 23.5 V31" stroke="#fff" stroke-width="1.3" fill="none"/>
<rect x="1361" y="0" width="1" height="40" fill="#555"/>
</svg>
<div class="t" style="left:186px;top:743px;color:#fff">ConsoleApp1 - Mic...</div>
<div class="t" style="left:445px;top:743px;color:#fff">Обзор интегриров...</div>
<div class="t" style="left:606px;top:743px;color:#fff">*Visual Studio.txt – ...</div>
<div class="t" style="left:767px;top:743px;color:#fff">Документ Microso...</div>
<div class="t" style="left:1143px;top:741px;color:#F2D600;font-size:17px;line-height:17px;letter-spacing:-0.5px">60</div>
<div class="t" style="left:1218px;top:742px;color:#fff">РУС</div>
<div class="t" style="left:1266px;top:734px;color:#fff;font-size:11.5px">17:35</div>
<div class="t" style="left:1253px;top:751px;color:#fff;font-size:11.5px;letter-spacing:-0.3px">05.02.2023</div>
</body></html>
